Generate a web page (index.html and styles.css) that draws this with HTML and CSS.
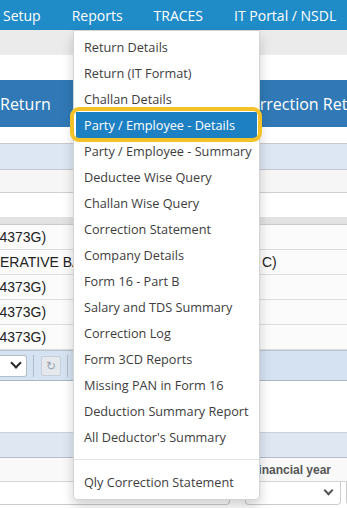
FILE: index.html
```html
<!DOCTYPE html>
<html lang="en">
<head>
  <meta charset="UTF-8">
  <title>TDS Reports</title>
  <link rel="stylesheet" href="styles.css">
</head>
<body>
  <div class="topbar">
    <span class="nav-item">Setup</span>
    <span class="nav-item">Reports</span>
    <span class="nav-item">TRACES</span>
    <span class="nav-item">IT Portal / NSDL</span>
  </div>
  <div class="subbar"></div>
  <div class="gap"></div>

  <div class="panel-head">
    <span class="tab-left">Return</span>
    <span class="tab-right">Correction Return</span>
  </div>

  <div class="row-blank"></div>
  <div class="row-filter"></div>
  <div class="row-shade"></div>
  <div class="row-white"></div>
  <div class="grid-head"></div>

  <div class="grid-row"><span class="cell-a">(24373G)</span><span class="cell-b"></span></div>
  <div class="grid-row"><span class="cell-a cell-name">ERATIVE BANK</span><span class="cell-b">C)</span></div>
  <div class="grid-row"><span class="cell-a">(24373G)</span><span class="cell-b"></span></div>
  <div class="grid-row"><span class="cell-a">(24373G)</span><span class="cell-b"></span></div>
  <div class="grid-row"><span class="cell-a">(24373G)</span><span class="cell-b"></span></div>

  <div class="pager">
    <div class="pager-select"><span class="chev"></span></div>
    <span class="pager-sep"></span>
    <div class="pager-btn">&#x21bb;</div>
    <span class="pager-sep"></span>
  </div>

  <div class="blank-area"></div>
  <div class="section-band"></div>

  <div class="form-labels">
    <span class="label-fy">Financial year</span>
  </div>
  <div class="form-inputs">
    <div class="input-left"></div>
    <div class="input-fy"><span class="chev"></span></div>
    <div class="input-next"></div>
  </div>

  <ul class="dropdown">
    <li>Return Details</li>
    <li>Return (IT Format)</li>
    <li>Challan Details</li>
    <li class="active">Party / Employee - Details<span class="ring"></span></li>
    <li>Party / Employee - Summary</li>
    <li>Deductee Wise Query</li>
    <li>Challan Wise Query</li>
    <li>Correction Statement</li>
    <li>Company Details</li>
    <li>Form 16 - Part B</li>
    <li>Salary and TDS Summary</li>
    <li>Correction Log</li>
    <li>Form 3CD Reports</li>
    <li>Missing PAN in Form 16</li>
    <li>Deduction Summary Report</li>
    <li>All Deductor's Summary</li>
    <li class="divider"></li>
    <li>Qly Correction Statement</li>
  </ul>
</body>
</html>
```

FILE: styles.css
```css
body { margin: 0; width: 347px; height: 508px; overflow: hidden; position: relative; background: #fff; font-family: "Liberation Sans", Arial, sans-serif; }

.topbar { height: 30px; background: #1f8bc7; color: #fff; font-family: "Open Sans", sans-serif; font-size: 14px; display: flex; align-items: center; gap: 31px; padding-left: 3px; white-space: nowrap; overflow: hidden; }
.nav-item { display: block; flex: none; }

.subbar { height: 25px; background: #ebebeb; }
.gap { height: 25px; }

.panel-head { height: 47px; background: #3079b6; color: #fff; font-family: "Open Sans", sans-serif; font-size: 16px; display: flex; align-items: center; white-space: nowrap; overflow: hidden; }
.tab-left { width: 240px; flex: none; }
.tab-right { flex: none; }

.row-blank { height: 16px; border-bottom: 1px solid #c9c9c9; }
.row-filter { height: 25px; background: #dde6f3; border-bottom: 1px solid #c4c9cf; }
.row-shade { height: 22px; background: #f6f6f6; border-bottom: 1px solid #cfcfcf; }
.row-white { height: 24px; background: #fff; }
.grid-head { height: 7px; background: #e2e2e2; border-bottom: 1px solid #cdcdcd; }

.grid-row { height: 24px; border-bottom: 1px solid #dcdcdc; display: flex; align-items: center; font-size: 14px; color: #222; background: #fbfbfb; white-space: nowrap; overflow: hidden; }
.cell-a { width: 262px; flex: none; text-indent: -13px; overflow: hidden; }
.cell-a.cell-name { text-indent: 0; }
.cell-b { flex: none; }

.pager { height: 29px; background: #d5e2f1; border-top: 1px solid #b9c4d0; border-bottom: 1px solid #a9b6c4; display: flex; align-items: center; }
.pager-select { width: 26px; height: 20px; flex: none; background: #fff; border: 1px solid #b3bcc7; border-left: none; border-radius: 0 3px 3px 0; position: relative; }
.pager-sep { width: 1px; height: 22px; background: #b1bccb; margin: 0 7px 0 6px; }
.pager-btn { width: 18px; height: 18px; background: #e5e9ee; border: 1px solid #c6ced8; border-radius: 2px; color: #9aa3ad; font-size: 12px; line-height: 18px; text-align: center; }

.chev { position: absolute; right: 6px; top: 3px; width: 6px; height: 6px; border-right: 2.5px solid #2a2a2a; border-bottom: 2.5px solid #2a2a2a; transform: rotate(45deg); }

.blank-area { height: 51px; }
.section-band { height: 24px; background: #dfe7f3; border-top: 1px solid #c9d2dc; border-bottom: 1px solid #b5bec8; }

.form-labels { height: 23px; display: flex; align-items: center; background: #f9f9f9; border-bottom: 1px solid #d5d5d5; }
.label-fy { margin-left: 251px; font-size: 12px; font-weight: bold; color: #555; white-space: nowrap; }

.form-inputs { display: flex; }
.input-left { flex: none; width: 229px; height: 22px; border: 1px solid #ccc; border-left: none; border-top: none; border-radius: 0 0 4px 0; background: #fff; }
.input-fy { flex: none; width: 94px; height: 22px; margin-left: 15px; border: 1px solid #ccc; border-top: none; border-radius: 0 0 4px 4px; background: #fff; position: relative; }
.input-fy .chev { right: 8px; top: 5px; border-color: #555; border-width: 0 2px 2px 0; width: 5px; height: 5px; }
.input-next { flex: none; width: 20px; height: 22px; margin-left: 5px; border: 1px solid #ccc; border-top: none; border-radius: 0 0 0 4px; }

.dropdown { position: absolute; left: 73px; top: 30px; width: 187px; margin: 0; padding: 3px 0 4px; list-style: none; background: #fff; border: 1px solid #d4d4d4; border-radius: 0 0 4px 4px; box-shadow: 0 6px 12px rgba(0, 0, 0, 0.18); font-family: "Open Sans", sans-serif; font-size: 12.7px; color: #3d3d3d; box-sizing: border-box; }
.dropdown li { height: 26px; line-height: 26px; padding-left: 10px; white-space: nowrap; position: relative; }
.dropdown li.active { background: #1d80c3; color: #fff; margin: 0 2px; padding-left: 8px; }
.dropdown li.divider { height: 19px; }
.dropdown li.divider::after { content: ""; position: absolute; left: 0; right: 0; top: 9px; border-top: 1px solid #e3e3e3; }
.ring { position: absolute; left: -6px; right: -5px; top: -5px; bottom: -4px; border: 4px solid #f3c228; border-radius: 9px; }
```
